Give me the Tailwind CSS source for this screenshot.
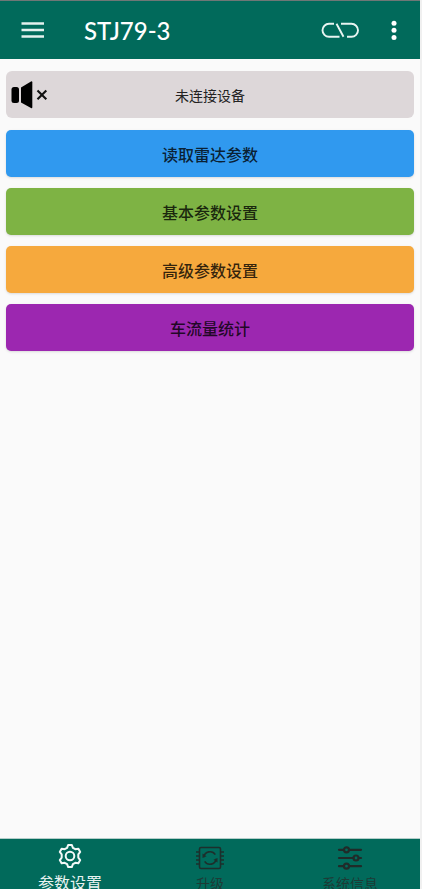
<!DOCTYPE html>
<html lang="zh-CN">
<head>
<meta charset="utf-8">
<meta name="viewport" content="width=device-width, initial-scale=1">
<title>STJ79-3</title>
<script src="https://cdn.jsdelivr.net/npm/@tailwindcss/browser@4"></script>
</head>
<body class="h-screen bg-[#f0f0f0] pr-[2px] font-['Noto_Sans_CJK_SC',sans-serif]">
<div class="flex h-full flex-col bg-[#fafafa]">
  <header class="flex h-[59px] shrink-0 items-center border-t border-[#6f7776] bg-[#016a5b] pr-4 pl-5 text-white">
    <button type="button" aria-label="菜单" class="flex size-6 items-center justify-center">
      <svg class="size-6" viewBox="0 0 24 24" fill="none" stroke="#e4f1ee" stroke-width="2.4"><path d="M1.500 5.500h22.500M1.500 12h22.500M1.500 18.500h22.500"/></svg>
    </button>
    <h1 class="ml-10 pt-[2px] text-2xl leading-8 font-medium font-['Lato','Noto_Sans_CJK_SC',sans-serif]">STJ79-3</h1>
    <button type="button" aria-label="连接设备" class="ml-auto">
      <svg class="h-5 w-10" viewBox="0 0 40 20" fill="none" stroke="#e8f4f1" stroke-width="1.900"><path d="M14 3.800H9a6.500 6.500 0 0 0 0 13H19.500M16.500 3.800L23.500 16.800M21 3.800H31.500a6.500 6.500 0 0 1 0 13H27"/></svg>
    </button>
    <button type="button" aria-label="更多" class="ml-6 flex h-6 w-5 items-center justify-center">
      <svg class="h-6 w-5" viewBox="0 0 20 24" fill="#fff"><circle cx="10" cy="5.200" r="2.500"/><circle cx="10" cy="12.300" r="2.500"/><circle cx="10" cy="19.400" r="2.500"/></svg>
    </button>
  </header>

  <main class="flex-1 px-[6px] pt-3">
    <section class="mb-3 grid h-[47px] grid-cols-[40px_1fr_40px] items-center rounded-md bg-[#ddd7d9]">
      <button type="button" aria-label="静音">
        <svg class="h-8 w-11" viewBox="0 0 44 32"><rect x="5.500" y="8" width="7.500" height="16" rx="2.500" fill="#000"/><path d="M15 8.500L25 2.500q1.300-.6 1.300.8v25q0 1.400-1.300.8L15 23.500z" fill="#000"/><path d="M31.500 11.500l8.800 8.800M40.300 11.500L31.500 20.300" stroke="#111" stroke-width="2.100" fill="none"/></svg>
      </button>
      <p class="text-center text-sm text-[#222]">未连接设备</p>
    </section>
    <div class="flex flex-col gap-[11px] text-base font-medium text-black/80">
      <button type="button" class="h-[47px] rounded-[5px] bg-[#3099ef] shadow-sm">读取雷达参数</button>
      <button type="button" class="h-[47px] rounded-[5px] bg-[#7eb344] shadow-sm">基本参数设置</button>
      <button type="button" class="h-[47px] rounded-[5px] bg-[#f6a93d] shadow-sm">高级参数设置</button>
      <button type="button" class="h-[47px] rounded-[5px] bg-[#9c27b0] shadow-sm">车流量统计</button>
    </div>
  </main>

  <nav class="grid h-[51px] shrink-0 grid-cols-3 overflow-hidden border-t border-[#b4ceca] bg-[#016a5b] text-sm leading-5 text-[#1d3b36]">
    <a href="#settings" aria-current="page" class="flex flex-col items-center gap-px pt-1 text-base leading-6 text-[#e8f3f1]">
      <svg class="size-[26px] shrink-0" viewBox="0 0 26 26" fill="none" stroke="#f3f9f8" stroke-width="2" stroke-linejoin="round"><circle cx="13" cy="13" r="4.300"/><path d="M11.200 1.900h3.600l1.100 2.900 2.400 1.400 3.100-.5 1.800 3.200-1.900 2.500v3.200l1.900 2.500-1.800 3.200-3.100-.5-2.400 1.400-1.100 2.900h-3.600l-1.100-2.900-2.400-1.400-3.100.5-1.800-3.200 1.900-2.500v-3.200L2.800 8.900l1.800-3.200 3.100.5 2.400-1.400z"/></svg>
      <span class="shrink-0">参数设置</span>
    </a>
    <a href="#upgrade" class="flex flex-col items-center pt-[5px]">
      <svg class="h-7 w-8 shrink-0" viewBox="0 0 32 28" fill="none" stroke="#1d2f2c" stroke-width="1.600"><rect x="5.500" y="3.500" width="21" height="21" rx="1.500"/><path d="M2 8h3.500M2 12h3.500M2 16h3.500M2 20h3.500M26.500 8H30M26.500 12H30M26.500 16H30M26.500 20H30M9.800 13a6.300 6.300 0 0 1 11.500-2.400M22.200 15a6.300 6.300 0 0 1-11.500 2.400"/><path d="M8.500 9.500v4.500l4-1.800zM23.500 18.500V14l-4 1.800z" fill="#1d2f2c" stroke="none"/></svg>
      <span class="shrink-0 pt-px">升级</span>
    </a>
    <a href="#system" class="flex flex-col items-center pt-[5px]">
      <svg class="h-7 w-8 shrink-0" viewBox="0 0 32 28" fill="none" stroke="#202b29" stroke-width="2.200" stroke-linecap="round"><path d="M5 5.800h5M16 5.800h11M5 14h14.500M25.500 14H27M5 22.200h5M16 22.200h11"/><circle cx="12.500" cy="5.800" r="2.500"/><circle cx="22" cy="14" r="2.500"/><circle cx="12.500" cy="22.200" r="2.500"/></svg>
      <span class="shrink-0 pt-px">系统信息</span>
    </a>
  </nav>
</div>
</body>
</html>
